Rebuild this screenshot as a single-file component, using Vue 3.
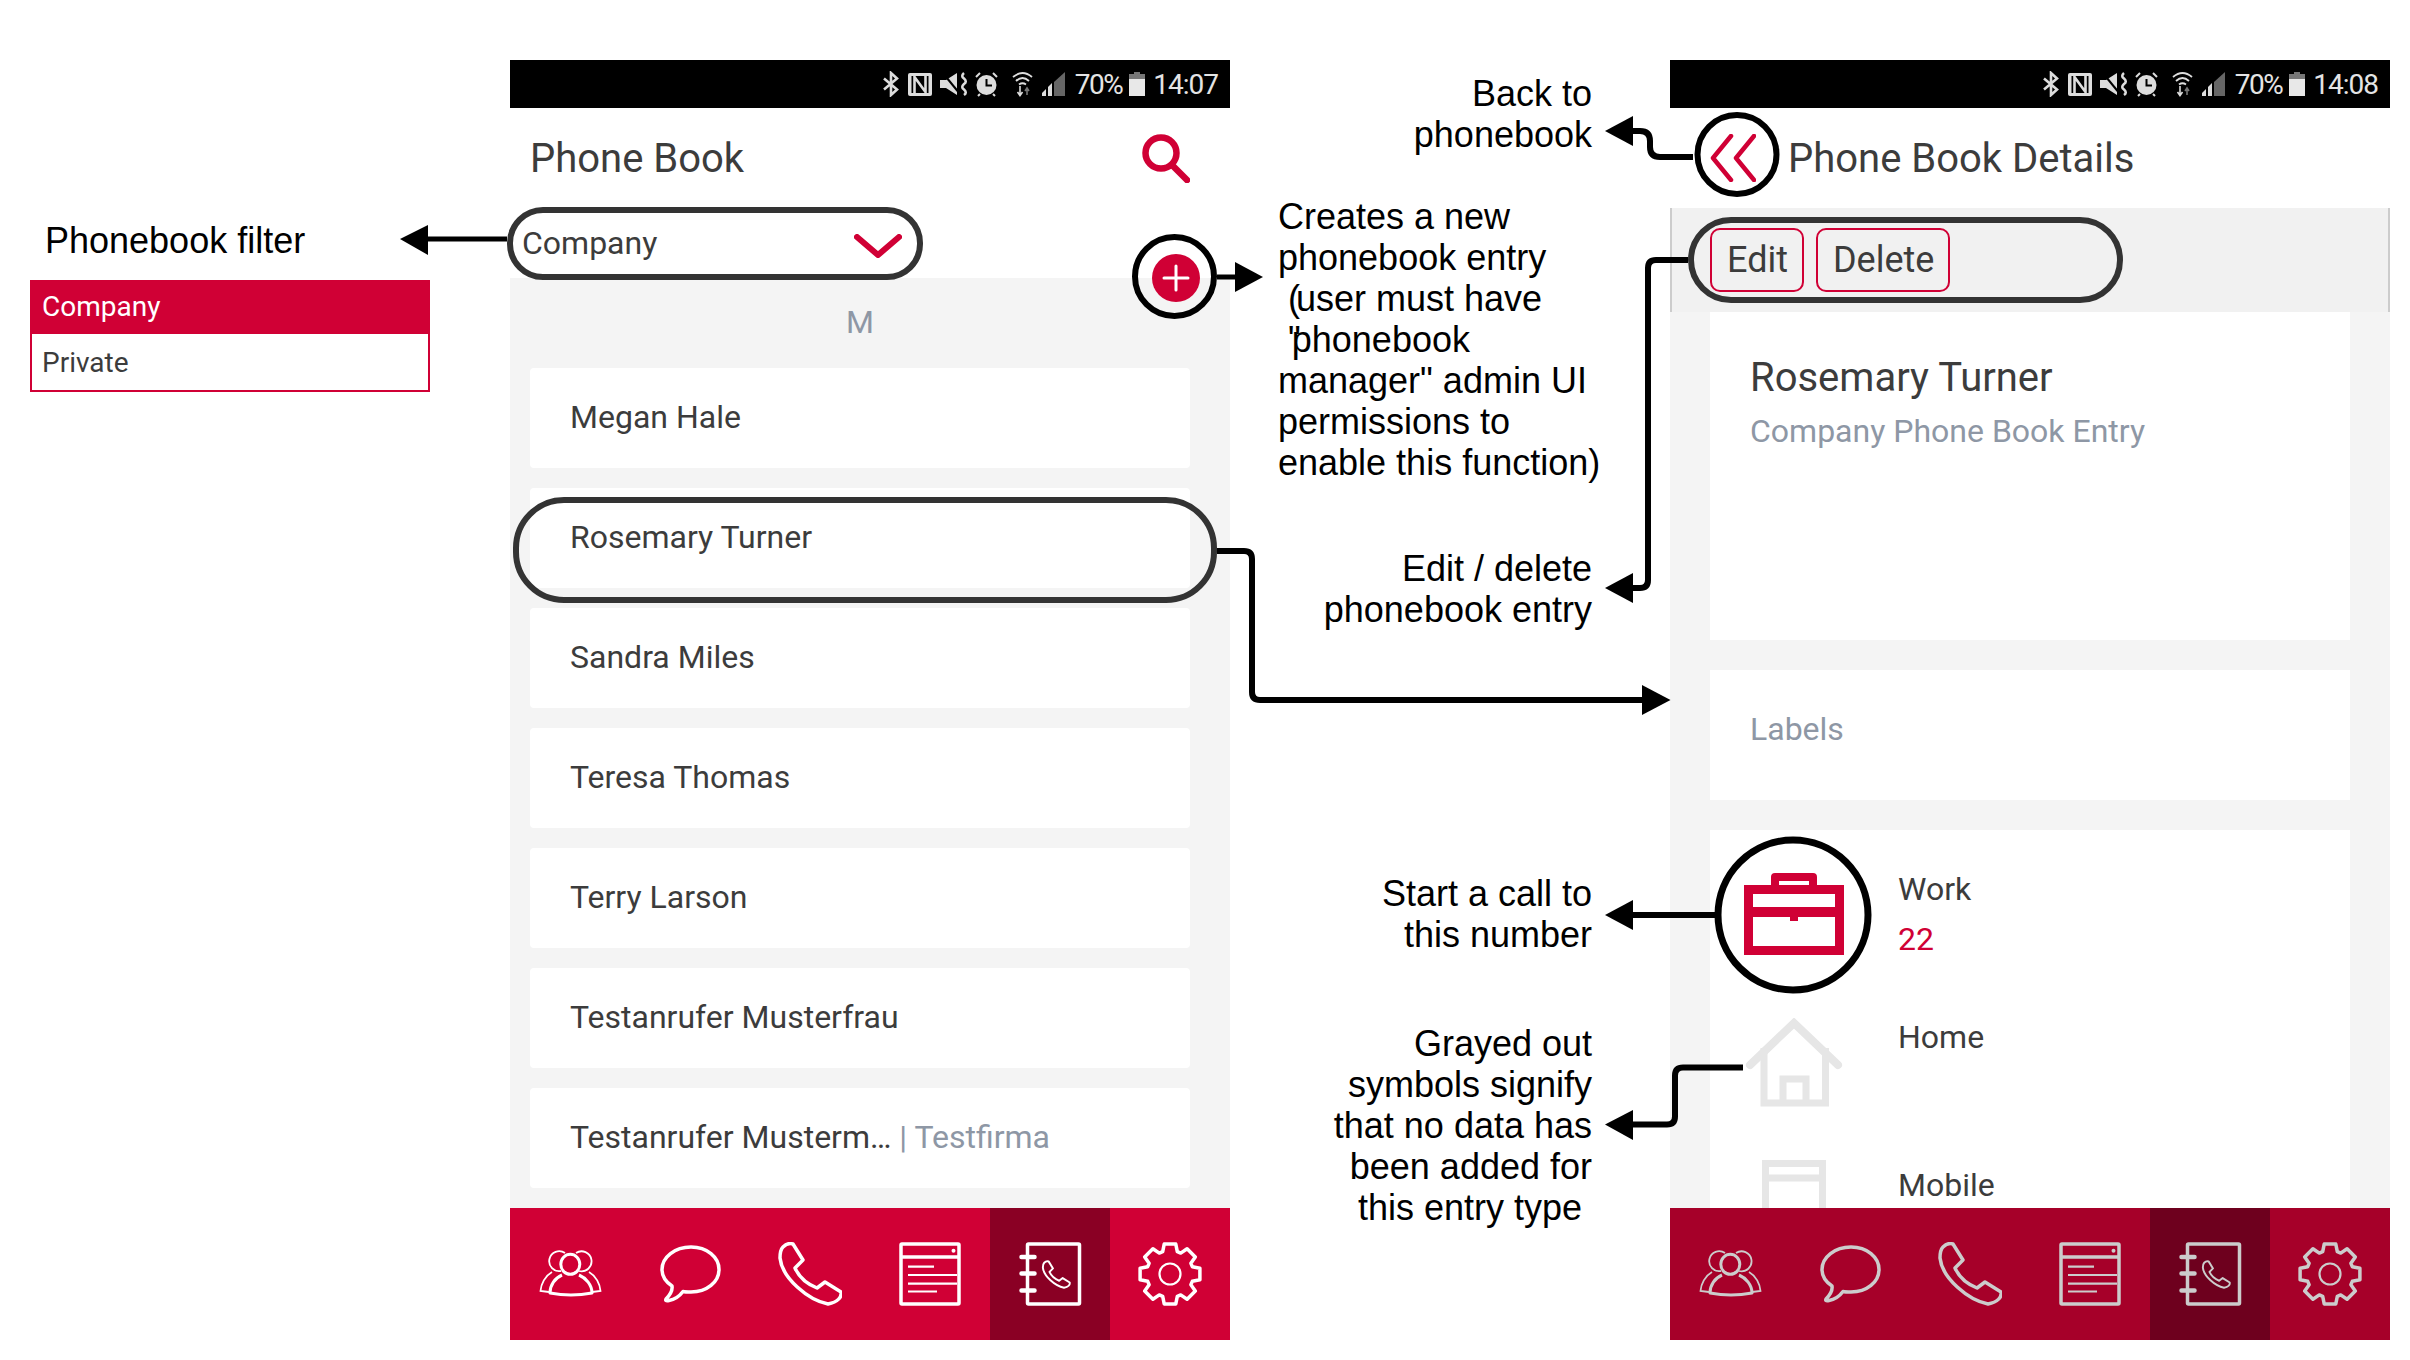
<script setup>
const handset = 'M5 5 C8 2 12 1 15 2 L25 18 L17 26 C21 35 29 42 39 46 L47 40 L63 50 C64 55 60 60 50 62 C30 58 4 36 2 16 C2 11 3 7 5 5 Z'

// gear outline, 8 teeth round the middle of a 64 box
const gear = (() => {
  const pts = []
  for (let i = 0; i < 8; i++) {
    const a = i * 45 - 90
    for (const [off, r] of [[-18, 23.5], [-11, 30.5], [11, 30.5], [18, 23.5]]) {
      const rad = ((a + off) * Math.PI) / 180
      pts.push((32 + r * Math.cos(rad)).toFixed(1) + ' ' + (32 + r * Math.sin(rad)).toFixed(1))
    }
  }
  return 'M' + pts.join(' L') + ' Z'
})()

const navIcons = ['people', 'chat', 'phone', 'doc', 'book', 'gear']

const contacts = [
  { name: 'Megan Hale' },
  { name: 'Rosemary Turner' },
  { name: 'Sandra Miles' },
  { name: 'Teresa Thomas' },
  { name: 'Terry Larson' },
  { name: 'Testanrufer Musterfrau' },
  { name: 'Testanrufer Musterm…', firm: ' | Testfirma' },
]

const rightNotes = [
  { top: 73, lines: ['Back to', 'phonebook'] },
  { top: 548, lines: ['Edit / delete', 'phonebook entry'] },
  { top: 873, lines: ['Start a call to', 'this number'] },
  { top: 1023, lines: ['Grayed out', 'symbols signify', 'that no data has', 'been added for', 'this entry type\u00a0'] },
]
</script>

<template>
  <div class="canvas">
    <svg class="defs" width="0" height="0">
      <symbol id="status" viewBox="0 0 184 26">
        <path d="M2 7.5 L15 18.5 L9 24 V2 L15 7.5 L2 18.5" fill="none" stroke="#ddd" stroke-width="2.6" />
        <rect x="26" y="2" width="24" height="23" rx="2" fill="#ddd" />
        <rect x="29.5" y="5" width="17" height="17" fill="#000" />
        <path d="M32.5 22 V6 L43.5 21 V5" fill="none" stroke="#ddd" stroke-width="2.6" />
        <path d="M58 9 H64 L75 2 V24 L64 17 H58 Z" fill="#ddd" />
        <path d="M60 1 L78 23" stroke="#000" stroke-width="2" />
        <path d="M82 2 q-3.5 3 0 5.5 q3.5 3 0 5.5 q-3.5 3 0 5.5 q3.5 3 0 5.5" fill="none" stroke="#ddd" stroke-width="2.6" />
        <circle cx="104.5" cy="14" r="10" fill="#ddd" />
        <path d="M104.5 8 V14.5 H110" fill="none" stroke="#000" stroke-width="2" />
        <path d="M94 6 L98 2 M115 6 L111 2 M98 23 L96 25 M111 23 L113 25" stroke="#ddd" stroke-width="2" />
        <path d="M131 6 Q140.5 -2 150 6 M134 10 Q140.5 4 147 10 M137 13.5 Q140.5 11 144 13.5" fill="none" stroke="#ddd" stroke-width="1.8" />
        <path d="M138 15 V24 M135.5 21 L138 24.5 L140.5 21" fill="none" stroke="#ddd" stroke-width="1.6" />
        <path d="M145 24 V18 M143 20 L145 17 L147 20" fill="none" stroke="#777" stroke-width="1.6" />
        <path d="M160 25 V22 L164 18 V25 Z M166 25 V16 L170 12 V25 Z" fill="#ddd" />
        <path d="M172 11 L183 1 V25 H172 Z" fill="#666" />
      </symbol>

      <symbol id="people" viewBox="0 0 64 64">
        <ellipse cx="32.3" cy="22.3" rx="9.5" ry="10" fill="none" stroke="currentColor" stroke-width="3" />
        <path d="M24 33 C17 36 12 43 12 51 Q33 55 54 51 C54 43 48 36 41 33" fill="none" stroke="currentColor" stroke-width="3" stroke-linejoin="round" />
        <path d="M23 29 A10 10 0 1 1 27 11 M41 29 A10 10 0 1 0 38 11" fill="none" stroke="currentColor" stroke-width="1.8" />
        <path d="M14 30 C7 34 3 42 2.5 49 L11 50 M51 30 C58 34 62 42 62.5 49 L54 50" fill="none" stroke="currentColor" stroke-width="1.8" />
      </symbol>
      <symbol id="chat" viewBox="0 0 64 64">
        <path d="M14 44 C15 50 11 54 8 57 C7 59 9 59 11 58.5 C17 57.5 22 53.5 25 49.5 C27 50 30 50 33 50 C49 50 61 40 61 27.5 C61 15 49 5 33 5 C17 5 4 15 4 27.5 C4 34 8 40 14 44 Z" fill="none" stroke="currentColor" stroke-width="3.5" stroke-linejoin="round" />
      </symbol>
      <symbol id="phone" viewBox="0 0 64 64">
        <path :d="handset" fill="none" stroke="currentColor" stroke-width="3.5" stroke-linejoin="round" />
      </symbol>
      <symbol id="doc" viewBox="0 0 64 64">
        <rect x="3" y="2" width="58" height="60" rx="1" fill="none" stroke="currentColor" stroke-width="3.5" />
        <path d="M3 15 H61" stroke="currentColor" stroke-width="3.5" />
        <circle cx="55.5" cy="8.7" r="2" fill="currentColor" />
        <path d="M10 24.7 H36 M10 33 H59 M10 41.7 H59 M10 49.5 H39" stroke="currentColor" stroke-width="2.2" />
      </symbol>
      <symbol id="book" viewBox="0 0 64 64">
        <rect x="9.5" y="2" width="52" height="60" rx="1" fill="none" stroke="currentColor" stroke-width="3.5" />
        <path d="M3.5 15 H16.5 M3.5 31.6 H16.5 M3.5 48.6 H16.5" stroke="currentColor" stroke-width="4.5" stroke-linecap="round" />
        <path :d="handset" transform="translate(24 18.5) scale(.44)" fill="none" stroke="currentColor" stroke-width="4.4" stroke-linejoin="round" />
      </symbol>
      <symbol id="gear" viewBox="0 0 64 64">
        <path :d="gear" fill="none" stroke="currentColor" stroke-width="3.5" stroke-linejoin="round" />
        <circle cx="32" cy="32" r="10.5" fill="none" stroke="currentColor" stroke-width="2.2" />
      </symbol>
    </svg>

    <!-- phone book list -->
    <section class="phone phone-list">
      <div class="status">
        <svg class="status-icons" width="184" height="26"><use href="#status" /></svg>
        <span class="status-pct">70%</span>
        <svg class="status-batt" width="16" height="24" viewBox="0 0 16 24">
          <path d="M5 0 H11 V2 H16 V24 H0 V2 H5 Z" fill="#777" />
          <rect y="7" width="16" height="17" fill="#e8e8e8" />
        </svg>
        <span class="status-time">14:07</span>
      </div>
      <header class="bar">
        <h1 class="title">Phone Book</h1>
        <svg class="search" width="48" height="49" viewBox="0 0 48 49">
          <circle cx="19" cy="19" r="15.5" fill="none" stroke="#d00035" stroke-width="6.5" />
          <path d="M30 31 L45 46" stroke="#d00035" stroke-width="6.5" stroke-linecap="round" />
        </svg>
      </header>
      <div class="filter">
        <span>Company</span>
        <svg width="48" height="24" viewBox="0 0 48 24">
          <path d="M3 3 L24 21 L45 3" fill="none" stroke="#d00035" stroke-width="6" stroke-linecap="round" stroke-linejoin="round" />
        </svg>
      </div>
      <div class="list">
        <div class="letter">M</div>
        <div v-for="c in contacts" :key="c.name" class="contact">
          {{ c.name }}<span v-if="c.firm" class="firm">{{ c.firm }}</span>
        </div>
      </div>
      <nav class="nav">
        <div v-for="icon in navIcons" :key="icon" class="tab" :class="{ active: icon === 'book' }">
          <svg width="64" height="64"><use :href="'#' + icon" /></svg>
        </div>
      </nav>
    </section>

    <!-- phone book details -->
    <section class="phone phone-detail">
      <div class="status">
        <svg class="status-icons" width="184" height="26"><use href="#status" /></svg>
        <span class="status-pct">70%</span>
        <svg class="status-batt" width="16" height="24" viewBox="0 0 16 24">
          <path d="M5 0 H11 V2 H16 V24 H0 V2 H5 Z" fill="#777" />
          <rect y="7" width="16" height="17" fill="#e8e8e8" />
        </svg>
        <span class="status-time">14:08</span>
      </div>
      <header class="bar bar-detail">
        <svg class="back" width="46" height="48" viewBox="0 0 46 48">
          <path d="M21 2 L3 24 L21 46 M44 2 L26 24 L44 46" fill="none" stroke="#d00035" stroke-width="4.5" stroke-linecap="round" stroke-linejoin="round" />
        </svg>
        <h1 class="title">Phone Book Details</h1>
      </header>
      <div class="toolbar">
        <button class="tool-btn">Edit</button>
        <button class="tool-btn">Delete</button>
      </div>
      <div class="details">
        <div class="card card-name">
          <div class="person">Rosemary Turner</div>
          <div class="person-sub">Company Phone Book Entry</div>
        </div>
        <div class="card card-labels">Labels</div>
        <div class="card card-numbers">
          <div class="number-row">
            <svg width="100" height="82" viewBox="0 0 100 82">
              <rect x="4.5" y="16.5" width="91" height="61" fill="none" stroke="#d00035" stroke-width="9" />
              <rect x="4" y="34" width="92" height="10" fill="#d00035" />
              <rect x="46" y="44" width="8" height="4" fill="#d00035" />
              <path d="M31 13 V4 H69 V13" fill="none" stroke="#d00035" stroke-width="8" stroke-linejoin="round" />
            </svg>
            <div class="number-text">
              <div>Work</div>
              <div class="number-value">22</div>
            </div>
          </div>
          <div class="number-row">
            <svg width="100" height="89" viewBox="-2 0 100 89">
              <path d="M4 47 L48 5 L92 47" fill="none" stroke="#e6e6e6" stroke-width="8" stroke-linecap="round" />
              <path d="M18 30 V85 H79.5 V30 M37 85 V61 H60 V85" fill="none" stroke="#e6e6e6" stroke-width="7" />
            </svg>
            <div class="number-text"><div>Home</div></div>
          </div>
          <div class="number-row">
            <svg width="100" height="100" viewBox="-18 0 100 100">
              <rect x="3.5" y="3.5" width="57" height="93" fill="none" stroke="#e6e6e6" stroke-width="7" />
              <path d="M0 18 H64" stroke="#e6e6e6" stroke-width="7" />
            </svg>
            <div class="number-text"><div>Mobile</div></div>
          </div>
        </div>
      </div>
      <nav class="nav nav-dim">
        <div v-for="icon in navIcons" :key="icon" class="tab" :class="{ active: icon === 'book' }">
          <svg width="64" height="64"><use :href="'#' + icon" /></svg>
        </div>
      </nav>
    </section>

    <!-- filter legend -->
    <div class="note note-filter">Phonebook filter</div>
    <div class="filter-menu">
      <div class="filter-opt selected">Company</div>
      <div class="filter-opt">Private</div>
    </div>

    <div class="note note-create">
      <div>Creates a new</div>
      <div>phonebook entry</div>
      <div class="indent"><span class="paren">(</span>user must have</div>
      <div class="indent"><span class="quote">"</span>phonebook</div>
      <div>manager" admin UI</div>
      <div>permissions to</div>
      <div>enable this function)</div>
    </div>

    <div v-for="n in rightNotes" :key="n.top" class="note note-right" :style="{ top: n.top + 'px' }">
      <div v-for="l in n.lines" :key="l">{{ l }}</div>
    </div>

    <!-- callouts drawn over both phones -->
    <svg class="overlay" width="2410" height="1360" viewBox="0 0 2410 1360">
      <rect x="510" y="210" width="410" height="67" rx="33" fill="none" stroke="#333" stroke-width="6" />
      <rect x="516" y="500" width="698" height="100" rx="48" fill="none" stroke="#333" stroke-width="6" />
      <rect x="1691" y="220" width="429" height="80" rx="40" fill="none" stroke="#333" stroke-width="6" />

      <g fill="none" stroke="#000" stroke-width="6">
        <circle cx="1174.5" cy="276.5" r="39.5" />
        <circle cx="1737" cy="154.5" r="39.5" />
        <circle cx="1793" cy="915" r="75" stroke-width="7" />
        <path d="M507 239 H425" stroke-width="5" />
        <path d="M1217 277 H1238" stroke-width="5" />
        <path d="M1217 551 H1244 Q1252 551 1252 559 V692 Q1252 700 1260 700 H1645" />
        <path d="M1693 157 H1660 Q1650 157 1650 147 V141 Q1650 131 1640 131 H1630" />
        <path d="M1688 260 H1656 Q1648 260 1648 268 V580 Q1648 588 1640 588 H1630" />
        <path d="M1716 915 H1630" />
        <path d="M1743 1067.5 H1683 Q1675 1067.5 1675 1075.5 V1116.5 Q1675 1124.5 1667 1124.5 H1630" />
      </g>
      <g fill="#000">
        <path d="M400 239 L428 225 V255 Z" />
        <path d="M1263 277 L1235 262 V292 Z" />
        <path d="M1670.5 700 L1642 685 V715 Z" />
        <path d="M1605 131 L1633 116 V146 Z" />
        <path d="M1605 588 L1633 573 V603 Z" />
        <path d="M1605 915 L1633 900 V930 Z" />
        <path d="M1605 1124.5 L1633 1110 V1140 Z" />
      </g>
      <circle cx="1176" cy="278" r="24" fill="#d00035" />
      <path d="M1176 266 V290 M1164 278 H1188" stroke="#fff" stroke-width="3" stroke-linecap="round" />
    </svg>
  </div>
</template>

<style scoped>
.canvas {
  position: relative;
  width: 2410px;
  height: 1360px;
  background: #fff;
  overflow: hidden;
  font-family: Roboto, sans-serif;
  color: #3c3c3c;
}

.defs {
  position: absolute;
}

.overlay {
  position: absolute;
  left: 0;
  top: 0;
  pointer-events: none;
}

.phone {
  position: absolute;
  top: 60px;
  width: 720px;
  height: 1280px;
  display: flex;
  flex-direction: column;
  background: #fff;
  overflow: hidden;
}

.phone-list {
  left: 510px;
}

.phone-detail {
  left: 1670px;
}

.status {
  flex: 0 0 48px;
  background: #000;
  display: flex;
  align-items: center;
  justify-content: flex-end;
  padding-right: 12px;
  color: #e4e4e4;
  font-size: 28px;
}

.status-pct {
  margin-left: 9px;
  letter-spacing: -1.5px;
}

.status-batt {
  margin-left: 7px;
}

.status-time {
  margin-left: 8px;
  letter-spacing: -1px;
}

.bar {
  flex: 0 0 100px;
  box-sizing: border-box;
  display: flex;
  align-items: center;
  justify-content: space-between;
  padding: 0 40px 0 20px;
}

.bar-detail {
  justify-content: flex-start;
  padding-left: 40px;
}

.back {
  margin-right: 32px;
}

.title {
  margin: 0;
  font-size: 40px;
  font-weight: 400;
}

.filter {
  flex: 0 0 70px;
  width: 392px;
  box-sizing: border-box;
  padding-left: 12px;
  display: flex;
  align-items: center;
  justify-content: space-between;
  font-size: 32px;
}

.filter svg {
  margin-top: 6px;
}

.list {
  flex: 1;
  background: #f4f4f4;
  padding: 0 40px 0 20px;
  display: flex;
  flex-direction: column;
  gap: 20px;
}

.letter {
  height: 70px;
  flex: none;
  display: flex;
  align-items: center;
  justify-content: center;
  color: #8e97a5;
  font-size: 32px;
  padding-top: 17px;
  box-sizing: border-box;
}

.contact {
  height: 100px;
  flex: none;
  box-sizing: border-box;
  background: #fff;
  border-radius: 4px;
  display: flex;
  align-items: center;
  white-space: pre;
  padding: 0 0 2px 40px;
  font-size: 32px;
}

.firm {
  color: #8e97a5;
}

.nav {
  flex: 0 0 132px;
  display: flex;
  background: #d00035;
  color: #fff;
}

.nav-dim {
  background: #a60029;
  color: #ccc;
}

.tab {
  flex: 1;
  display: flex;
  align-items: center;
  justify-content: center;
}

.tab.active {
  background: #8a0024;
}

.nav-dim .tab.active {
  background: #6e001e;
}

.toolbar {
  flex: 0 0 104px;
  box-sizing: border-box;
  background: #f1f1f1;
  border-left: 2px solid #ccc;
  border-right: 2px solid #ccc;
  padding-left: 38px;
  display: flex;
  align-items: center;
  gap: 12px;
}

.tool-btn {
  height: 64px;
  padding: 0 14px 0 15px;
  background: transparent;
  border: 2px solid #d00035;
  border-radius: 10px;
  font-family: inherit;
  font-size: 36px;
  color: #3c3c3c;
}

.details {
  flex: 1;
  min-height: 0;
  overflow: hidden;
  background: #f4f4f4;
  padding: 0 40px;
  display: flex;
  flex-direction: column;
}

.card {
  flex: none;
  background: #fff;
}

.card-name {
  height: 328px;
  box-sizing: border-box;
  padding: 42px 0 0 40px;
}

.person {
  font-size: 40px;
}

.person-sub {
  margin-top: 11px;
  font-size: 32px;
  color: #8e97a5;
}

.card-labels {
  margin-top: 30px;
  height: 130px;
  box-sizing: border-box;
  padding: 0 0 12px 40px;
  display: flex;
  align-items: center;
  font-size: 32px;
  color: #8e97a5;
}

.card-numbers {
  margin-top: 30px;
  padding: 10px 0 0 34px;
}

.number-row {
  height: 148px;
  display: flex;
  align-items: center;
  gap: 54px;
  font-size: 32px;
}

.number-text {
  align-self: flex-start;
  padding-top: 30px;
  line-height: 38px;
}

.number-value {
  margin-top: 12px;
  color: #d00035;
}

.note {
  position: absolute;
  font-family: "Liberation Sans", Arial, sans-serif;
  font-size: 36px;
  line-height: 41px;
  color: #000;
  white-space: nowrap;
}

.note-filter {
  left: 45px;
  top: 220px;
}

.note-create {
  left: 1278px;
  top: 196px;
}

.note-right {
  right: 818px;
  text-align: right;
}

.indent {
  padding-left: 10px;
}

.paren {
  margin-right: -4px;
}

.quote {
  margin-right: -9px;
}

.filter-menu {
  position: absolute;
  left: 30px;
  top: 280px;
  width: 400px;
  height: 112px;
  box-sizing: border-box;
  border: 2px solid #d00035;
  font-size: 28px;
}

.filter-opt {
  height: 54px;
  display: flex;
  align-items: center;
  padding: 2px 0 0 10px;
  box-sizing: border-box;
}

.filter-opt.selected {
  margin: -2px -2px 0;
  padding: 0 0 2px 12px;
  background: #d00035;
  color: #fff;
}
</style>
